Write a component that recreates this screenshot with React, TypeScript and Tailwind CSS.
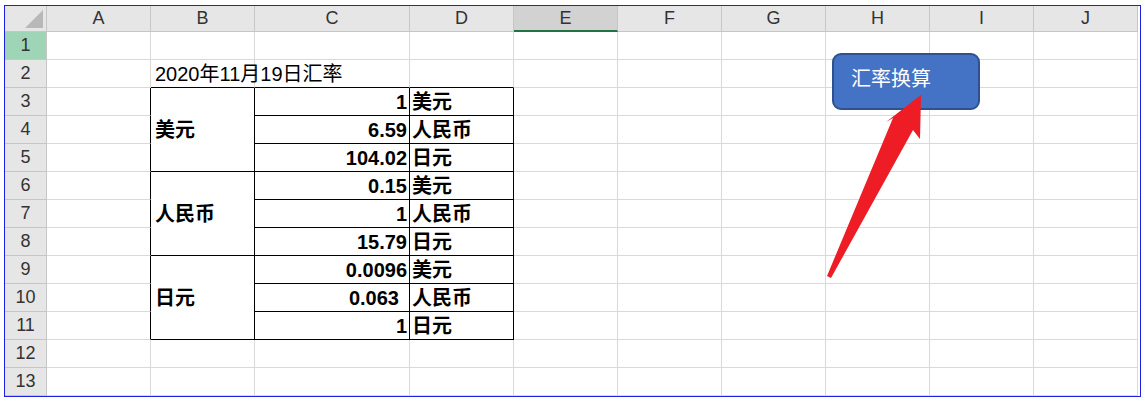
import React from "react";

const cols = ["A","B","C","D","E","F","G","H","I","J"];
const widths = [104,104,155,104,104,104,104,104,104,104];
const font = { fontFamily: '"Liberation Sans","Noto Sans CJK SC",sans-serif' };

type Cell = { t?: string; cls?: string; span?: number; hide?: boolean; br?: boolean; bb?: boolean };

export default function App() {
  const grid: Cell[][] = Array.from({ length: 13 }, () => cols.map(() => ({})));
  grid[1][1] = { t: "2020年11月19日汇率", cls: "overflow-visible whitespace-nowrap z-10" };
  const groups = [
    ["美元", [["1","美元"],["6.59","人民币"],["104.02","日元"]]],
    ["人民币", [["0.15","美元"],["1","人民币"],["15.79","日元"]]],
    ["日元", [["0.0096","美元"],["0.063","人民币"],["1","日元"]]],
  ] as const;
  groups.forEach((g, gi) => {
    const r0 = 2 + gi * 3;
    grid[r0][1] = { t: g[0], span: 3, br: true, bb: true, cls: "font-bold" };
    grid[r0 + 1][1] = { hide: true };
    grid[r0 + 2][1] = { hide: true };
    g[1].forEach((row, i) => {
      grid[r0 + i][2] = { t: row[0], br: true, bb: true, cls: `font-bold justify-end ${row[0] === "0.063" ? "pr-[10px]" : "pr-[2px]"}` };
      grid[r0 + i][3] = { t: row[1], br: true, bb: true, cls: "font-semibold !px-[2px]" };
    });
    for (let i = 0; i < 3; i++) grid[r0 + i][0].br = true;
  });
  grid[1][1].bb = true; grid[1][2].bb = true; grid[1][3].bb = true;

  return (
    <div className="w-[1145px] h-[401px] bg-white pl-[4px] pt-[5px] relative" style={font}>
      <div className="w-[1137px] h-[392px] border border-[#1f1fe0] overflow-hidden">
        <div
          className="grid"
          style={{ gridTemplateColumns: `42px ${widths.map(w => w + "px").join(" ")}`, gridTemplateRows: `26px repeat(13, 28px)` }}
        >
          <div className="bg-[#e6e6e6] border-r border-b border-[#c6c6c6] relative">
            <div className="absolute right-[3px] bottom-[3px] w-0 h-0 border-l-[18px] border-l-transparent border-b-[18px] border-b-[#b8b8b8]" />
          </div>
          {cols.map(c => (
            <div key={c} className={`flex items-center justify-center text-[18px] text-[#333] border-r border-b ${c === "E" ? "bg-[#d2d2d2] border-b-[2px] border-b-[#217346] border-r-[#c6c6c6]" : "bg-[#e6e6e6] border-[#c6c6c6]"}`}>{c}</div>
          ))}
          {grid.map((row, ri) => (
            <React.Fragment key={ri}>
              <div className={`flex items-center justify-center text-[18px] text-[#333] border-r border-b border-[#c6c6c6] ${ri === 0 ? "bg-[#9fd5b7]" : "bg-[#e6e6e6]"}`}>{ri + 1}</div>
              {row.map((cell, ci) => cell.hide ? null : (
                <div
                  key={ci}
                  className={`flex items-center px-[4px] text-[20px] text-black border-r border-b ${cell.br ? "border-r-black" : "border-r-[#d9d9d9]"} ${cell.bb ? "border-b-black" : "border-b-[#d9d9d9]"} ${cell.cls ?? ""}`}
                  style={cell.span ? { gridRow: `span ${cell.span}` } : undefined}
                >
                  {cell.t}
                </div>
              ))}
            </React.Fragment>
          ))}
        </div>
      </div>
      <div className="absolute left-[832px] top-[53px] w-[148px] h-[57px] bg-[#4472c4] border-2 border-[#2f528f] rounded-[9px] text-white text-[20px] pl-[17px] pt-[9px]">汇率换算</div>
      <svg className="absolute left-0 top-0" width="1145" height="401">
        <polygon points="827,276 893,118 886,122 921,95 920,139 913,130 831,278" fill="#ee1c25" />
      </svg>
    </div>
  );
}
